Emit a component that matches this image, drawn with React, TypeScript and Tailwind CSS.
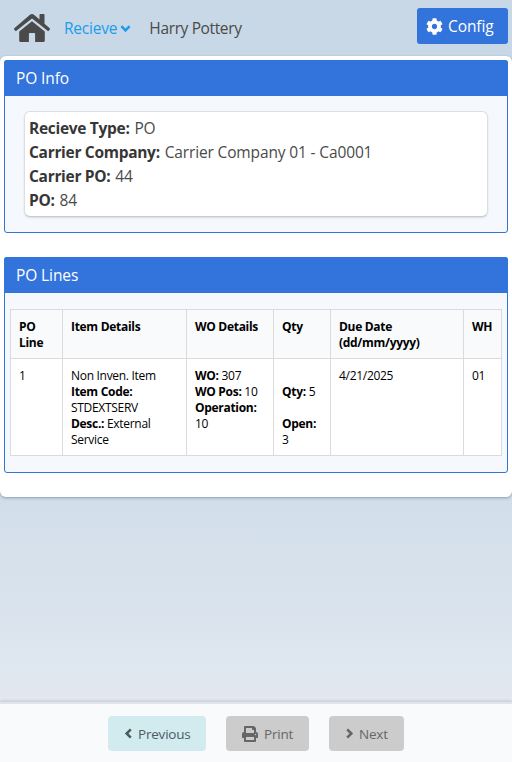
import type { ReactNode } from 'react';
import { FaCog, FaPrint } from 'react-icons/fa';

function HomeIcon() {
  return (
    <svg viewBox="0 0 36 28" className="h-7 w-9 shrink-0" fill="#4a4a4a">
      <path d="M18 0c.7 0 1.2.2 1.7.6L25.5 5.500V.8c0-.5.300-.8.800-.8h3.400c.5 0 .8.300.8.800v9l5.200 4.500c.4.300.4.800.1 1.200l-1 1.200c-.3.400-.8.400-1.200.100L18.700 5c-.4-.4-1-.4-1.400 0L2.400 16.800c-.4.300-.9.300-1.200-.100l-1-1.200c-.3-.4-.3-.9.100-1.200L16.300.6c.5-.4 1-.6 1.700-.6z" />
      <path d="M18 7.200 5.200 17.500v9c0 .9.600 1.500 1.500 1.500h8.200v-8.200c0-.4.300-.7.700-.7h4.800c.4 0 .7.300.7.700V28h8.200c.9 0 1.500-.6 1.500-1.500v-9z" />
    </svg>
  );
}

function Chevron({ className }: { className: string }) {
  return (
    <svg viewBox="0 0 12 12" className={`shrink-0 ${className}`} fill="none" stroke="currentColor" strokeWidth="2.8">
      <path d="M1.500 3.500 6 8l4.500-4.500" strokeLinejoin="miter" />
    </svg>
  );
}

function Panel({ title, className, children }: { title: string; className: string; children: ReactNode }) {
  return (
    <section className={`rounded-[3px] border border-[#3273dc] bg-[#f5f9fe] ${className}`}>
      <h2 className="-mx-px -mt-px flex h-9 items-center rounded-t-[3px] bg-[#3273dc] pl-3 pt-[2px] text-[15.5px] tracking-[-0.1px] text-white">
        {title}
      </h2>
      {children}
    </section>
  );
}

function Field({ label, value }: { label: string; value: string }) {
  return (
    <p className="whitespace-nowrap tracking-[-0.14px] text-[#4a4a4a]">
      <b className="mr-[1px] font-bold tracking-[-0.3px] text-[#363636]">{label}</b> {value}
    </p>
  );
}

const cell = 'border border-[#dbdbdb] px-2 pb-[7px] pt-[9px] text-left align-top';

export default function App() {
  return (
    <div className="flex h-[762px] w-[512px] flex-col overflow-hidden bg-gradient-to-b from-[#c8d8e6] from-50% to-[#e6ebf2] font-['Open_Sans','Noto_Sans',sans-serif] text-[#4a4a4a]">
      <header className="flex h-14 shrink-0 items-center bg-[#c8d8e6] pl-[14px] pr-1 text-[15.5px]">
        <HomeIcon />
        <a className="ml-[14px] flex items-center text-[#209cee]">
          <span className="pt-[2px] tracking-[-0.2px]">Recieve</span>
          <Chevron className="ml-[3px] size-[11px]" />
        </a>
        <span className="ml-[18px] pt-[2px] tracking-[-0.37px]">Harry Pottery</span>
        <button className="mb-1 ml-auto flex h-9 w-[91px] items-center rounded-[3px] bg-[#3273dc] pl-[9px] text-white">
          <FaCog className="mr-[5px] size-[17px]" />
          <span className="pt-[2px] tracking-[-0.1px]">Config</span>
        </button>
      </header>

      <main className="h-[441px] shrink-0 rounded-[6px] bg-white px-1 pt-1 shadow-[0_1px_3px_rgba(10,30,60,0.35)]">
        <Panel title="PO Info" className="h-[173px]">
          <div className="ml-[19px] mt-[15px] h-[106px] w-[464px] rounded-[6px] border border-[#dbdfe4] border-b-[#c9cbce] bg-white px-1 pt-[4px] text-[15.5px] leading-6 shadow-[0_1px_2px_rgba(0,0,0,0.12)]">
            <Field label="Recieve Type:" value="PO" />
            <Field label="Carrier Company:" value="Carrier Company 01 - Ca0001" />
            <Field label="Carrier PO:" value="44" />
            <Field label="PO:" value="84" />
          </div>
        </Panel>

        <Panel title="PO Lines" className="mt-6 h-[216px]">
          <table className="ml-[5px] mt-4 w-[492px] table-fixed border-collapse bg-white text-[12px] leading-4 tracking-[-0.3px] text-black">
            <colgroup>
              <col className="w-[52px]" />
              <col className="w-[124px]" />
              <col className="w-[87px]" />
              <col className="w-[57px]" />
              <col className="w-[133px]" />
              <col className="w-[38px]" />
            </colgroup>
            <thead className="bg-[#f8fafc]">
              <tr className="h-[49px]">
                <th className={cell}>PO<br />Line</th>
                <th className={cell}>Item Details</th>
                <th className={cell}>WO Details</th>
                <th className={cell}>Qty</th>
                <th className={cell}>Due Date<br />(dd/mm/yyyy)</th>
                <th className={cell}>WH</th>
              </tr>
            </thead>
            <tbody>
              <tr className="h-[97px] whitespace-nowrap">
                <td className={cell}>1</td>
                <td className={cell}>
                  Non Inven. Item<br /><b>Item Code:</b><br />STDEXTSERV<br /><b>Desc.:</b> External<br />Service
                </td>
                <td className={cell}>
                  <b>WO:</b> 307<br /><b>WO Pos:</b> 10<br /><b>Operation:</b><br />10
                </td>
                <td className={cell}>
                  <br /><b>Qty:</b> 5<br /><br /><b>Open:</b><br />3
                </td>
                <td className={cell}>4/21/2025</td>
                <td className={cell}>01</td>
              </tr>
            </tbody>
          </table>
        </Panel>
      </main>

      <footer className="mt-auto flex h-[60px] shrink-0 justify-center gap-5 border-t-2 border-[#dfe5ea] bg-[#f8fafc] pt-3 text-[13.5px] tracking-[-0.2px] shadow-[0_-1px_3px_rgba(0,0,0,0.15)]">
        <button className="flex h-[35px] w-[98px] items-center rounded-[4px] bg-[#d1ebef] pl-[15px] text-[#4f5a63]">
          <Chevron className="mr-[4px] size-[11px] rotate-90" />
          <span className="pt-[2px]">Previous</span>
        </button>
        <button className="flex h-[35px] w-[83px] items-center rounded-[4px] bg-[#cccccc] pl-4 text-[#666666]">
          <FaPrint className="mr-[6px] size-4" />
          <span className="pt-[2px]">Print</span>
        </button>
        <button className="flex h-[35px] w-[75px] items-center rounded-[4px] bg-[#cccccc] pl-[15px] text-[#666666]">
          <Chevron className="mr-[4px] size-[11px] -rotate-90" />
          <span className="pt-[2px]">Next</span>
        </button>
      </footer>
    </div>
  );
}
